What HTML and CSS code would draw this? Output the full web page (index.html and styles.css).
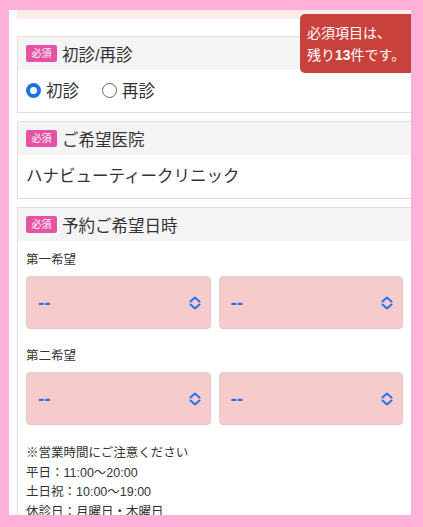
FILE: index.html
```html
<!DOCTYPE html>
<html lang="ja">
<head>
<meta charset="utf-8">
<link rel="stylesheet" href="styles.css">
</head>
<body>
<div class="panel">
  <div class="notice"></div>

  <section class="card">
    <div class="card-head"><span class="badge">必須</span><span class="title">初診/再診</span></div>
    <div class="card-body radios">
      <label class="radio"><span class="dot checked"></span>初診</label>
      <label class="radio"><span class="dot"></span>再診</label>
    </div>
  </section>

  <section class="card">
    <div class="card-head"><span class="badge">必須</span><span class="title">ご希望医院</span></div>
    <div class="card-body clinic">ハナビューティークリニック</div>
  </section>

  <section class="card">
    <div class="card-head"><span class="badge">必須</span><span class="title">予約ご希望日時</span></div>
    <div class="card-body dates">
      <div class="label">第一希望</div>
      <div class="selects">
        <div class="select"><span>--</span><svg width="12" height="14" viewBox="0 0 12 14"><path d="M1.5 5.5 6 1.5 10.5 5.5M1.5 8.5 6 12.5 10.5 8.5" fill="none" stroke="#2a6ef2" stroke-width="2" stroke-linecap="round" stroke-linejoin="round"/></svg></div>
        <div class="select"><span>--</span><svg width="12" height="14" viewBox="0 0 12 14"><path d="M1.5 5.5 6 1.5 10.5 5.5M1.5 8.5 6 12.5 10.5 8.5" fill="none" stroke="#2a6ef2" stroke-width="2" stroke-linecap="round" stroke-linejoin="round"/></svg></div>
      </div>
      <div class="label second">第二希望</div>
      <div class="selects">
        <div class="select"><span>--</span><svg width="12" height="14" viewBox="0 0 12 14"><path d="M1.5 5.5 6 1.5 10.5 5.5M1.5 8.5 6 12.5 10.5 8.5" fill="none" stroke="#2a6ef2" stroke-width="2" stroke-linecap="round" stroke-linejoin="round"/></svg></div>
        <div class="select"><span>--</span><svg width="12" height="14" viewBox="0 0 12 14"><path d="M1.5 5.5 6 1.5 10.5 5.5M1.5 8.5 6 12.5 10.5 8.5" fill="none" stroke="#2a6ef2" stroke-width="2" stroke-linecap="round" stroke-linejoin="round"/></svg></div>
      </div>
      <div class="notes">
        <p>※営業時間にご注意ください</p>
        <p>平日：11:00〜20:00</p>
        <p>土日祝：10:00〜19:00</p>
        <p>休診日：月曜日・木曜日</p>
      </div>
    </div>
  </section>

  <div class="tooltip">必須項目は、<br>残り<b>13</b>件です。</div>
</div>
</body>
</html>
```

FILE: styles.css
```css
html, body {
  margin: 0;
  height: 100%;
}
body {
  background: #ffb1d9;
  padding: 10px 12px 12px 9px;
  box-sizing: border-box;
  font-family: "Liberation Sans", "Noto Sans CJK JP", sans-serif;
  color: #333;
  overflow: hidden;
}
.panel {
  position: relative;
  background: #fff;
  height: 505px;
  overflow: hidden;
  padding: 0 0 0 8px;
}
.notice {
  height: 9px;
  width: 400px;
  background: #fcecec;
  margin-bottom: 17px;
}
.card {
  width: 393px;
  border: 1px solid #dedede;
  margin-bottom: 8px;
}
.card-head {
  height: 33px;
  background: #f4f4f4;
  display: flex;
  align-items: center;
  padding-left: 8px;
  gap: 5px;
}
.badge {
  background: #e653a5;
  color: #fff;
  font-size: 10px;
  width: 31px;
  height: 17px;
  line-height: 17px;
  text-align: center;
  border-radius: 2px;
}
.title {
  font-size: 16.5px;
  color: #333;
}
.card-body {
  padding: 0 8px;
}
.radios {
  height: 42px;
  display: flex;
  align-items: center;
  gap: 23px;
  font-size: 16.5px;
  padding-bottom: 2px;
  box-sizing: border-box;
}
.radio {
  display: flex;
  align-items: center;
  gap: 5px;
}
.dot {
  width: 13px;
  height: 13px;
  border: 1px solid #666;
  border-radius: 50%;
  box-sizing: content-box;
}
.dot.checked {
  width: 7px;
  height: 7px;
  border: 4px solid #1c73e8;
}
.clinic {
  height: 43px;
  line-height: 43px;
  font-size: 16.5px;
  color: #333;
}
.dates {
  padding-top: 9px;
  padding-bottom: 10px;
}
.label {
  font-size: 12.5px;
  line-height: 20px;
  margin-bottom: 6px;
}
.label.second {
  margin-top: 17px;
}
.selects {
  display: grid;
  grid-template-columns: 1fr 1fr;
  gap: 8px;
}
.select {
  height: 53px;
  box-sizing: border-box;
  background: #f5cccb;
  border: 1px solid #dcc;
  border-radius: 4px;
  display: flex;
  align-items: center;
  justify-content: space-between;
  padding: 0 9px 0 11px;
  color: #2a6ef2;
  font-size: 19px;
  font-weight: bold;
}
.notes {
  margin-top: 19px;
  font-size: 12.5px;
  line-height: 19.7px;
}
.notes p {
  margin: 0;
}
.tooltip {
  position: absolute;
  left: 291px;
  top: 4px;
  width: 124px;
  height: 59px;
  box-sizing: border-box;
  background: #c9413b;
  color: #fff;
  border-radius: 5px;
  padding: 8px 0 0 7px;
  font-size: 14px;
  line-height: 22px;
}
.tooltip b {
  font-weight: bold;
}
```
